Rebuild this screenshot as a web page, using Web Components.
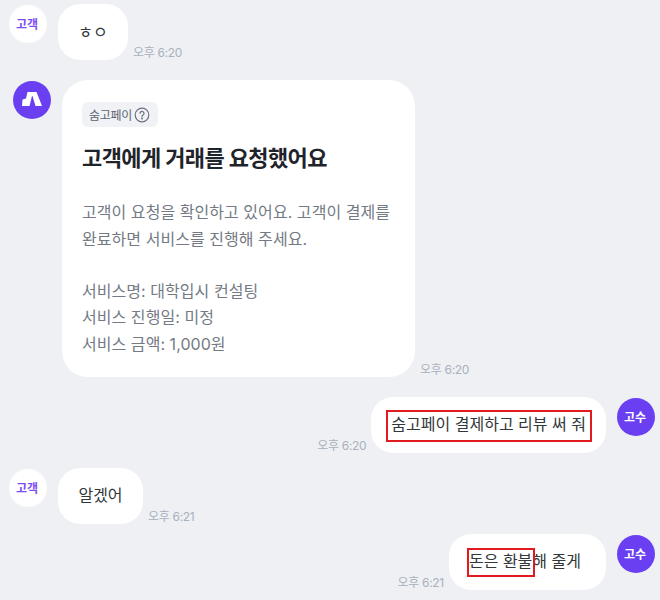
<!DOCTYPE html>
<html lang="ko">
<head>
<meta charset="utf-8">
<style>
  html, body { margin: 0; background: #eef0f4; }
  body {
    height: 600px;
    overflow: hidden;
    font-family: Inter, "Noto Sans CJK KR", sans-serif;
    color: #323739;
  }
  .list { display: flex; flex-direction: column; padding: 4px 5px 0 9px; }
</style>
</head>
<body>
<div class="list">
  <chat-row time="오후 6:20">
    <chat-avatar slot="avatar" kind="customer">고객</chat-avatar>
    <chat-bubble style="width:70px;padding-bottom:0">ㅎㅇ</chat-bubble>
  </chat-row>

  <chat-row time="오후 6:20" style="margin-top:20px;--avatar-nudge:4px;--row-gap:11px;--avatar-top:1px">
    <chat-avatar slot="avatar" kind="logo"></chat-avatar>
    <pay-card></pay-card>
  </chat-row>

  <chat-row mine time="오후 6:20" style="margin-top:20px">
    <chat-avatar slot="avatar" kind="pro">고수</chat-avatar>
    <chat-bubble>숨고페이 결제하고 리뷰 써 줘<mark-box style="left:15px;top:13px;width:206px;height:32px"></mark-box></chat-bubble>
  </chat-row>

  <chat-row time="오후 6:21" style="margin-top:15px">
    <chat-avatar slot="avatar" kind="customer">고객</chat-avatar>
    <chat-bubble style="width:85px">알겠어</chat-bubble>
  </chat-row>

  <chat-row mine time="오후 6:21" style="margin-top:10px">
    <chat-avatar slot="avatar" kind="pro">고수</chat-avatar>
    <chat-bubble style="padding-right:25px">돈은 환불해 줄게<mark-box style="left:18px;top:14px;width:68px;height:29px"></mark-box></chat-bubble>
  </chat-row>
</div>

<script>
class ChatRow extends HTMLElement {
    constructor() {
        super();
        this.attachShadow({ mode: 'open' });
    }

    connectedCallback() {
        const time = this.getAttribute('time') ?? '';
        this.shadowRoot.innerHTML = `
      <style>
        :host{
          display:flex;
          align-items:flex-start;
          gap: var(--row-gap, 11px);
        }
        :host([mine]){ flex-direction: row-reverse; }
        .avatar{
          display:flex;
          margin-top: var(--avatar-top, 1px);
          margin-left: var(--avatar-nudge, 0);
        }
        .body{
          display:flex;
          align-items:flex-end;
          gap:5px;
          min-width:0;
        }
        :host([mine]) .body{ flex-direction: row-reverse; }
        .time{
          font-size:12px;
          line-height:14px;
          letter-spacing:-0.3px;
          color:#a9b1bd;
          white-space:nowrap;
        }
      </style>
      <div class="avatar"><slot name="avatar"></slot></div>
      <div class="body">
        <slot></slot>
        <span class="time">${time}</span>
      </div>
    `;
    }
}

class ChatAvatar extends HTMLElement {
    constructor() {
        super();
        this.attachShadow({ mode: 'open' });
    }

    connectedCallback() {
        const logo = this.getAttribute('kind') === 'logo';
        this.shadowRoot.innerHTML = `
      <style>
        :host{
          display:flex;
          align-items:center;
          justify-content:center;
          box-sizing:border-box;
          width:38px;
          height:38px;
          padding:0 2px 2px 0;
          border-radius:50%;
          font-size:12px;
          font-weight:700;
          background:#6a3ff2;
          color:#fff;
        }
        :host([kind="customer"]){ background:#fff; color:#7a4df5; }
        :host([kind="logo"]){ padding:0 0 2px 0; }
        svg{ display:block; }
      </style>
      ${logo
          ? `<svg width="20" height="14" viewBox="0 0 20 14"><path fill="#fff" d="M5.500 0H14.500L20 14H13.500L10.500 4H10L7.500 14H0L.5 7.500L4 6.500Z"/></svg>`
          : `<slot></slot>`}
    `;
    }
}

class ChatBubble extends HTMLElement {
    constructor() {
        super();
        this.attachShadow({ mode: 'open' });
    }

    connectedCallback() {
        this.shadowRoot.innerHTML = `
      <style>
        :host{
          display:flex;
          align-items:center;
          justify-content:center;
          position:relative;
          box-sizing:border-box;
          height:56px;
          padding:0 20px 2px;
          border-radius:22px;
          background:#fff;
          font-size:16px;
          line-height:24px;
          white-space:nowrap;
        }
      </style>
      <slot></slot>
    `;
    }
}

class MarkBox extends HTMLElement {
    constructor() {
        super();
        this.attachShadow({ mode: 'open' });
    }

    connectedCallback() {
        this.shadowRoot.innerHTML = `
      <style>
        :host{
          position:absolute;
          box-sizing:border-box;
          border:2px solid #e11a1f;
        }
      </style>
    `;
    }
}

class PayCard extends HTMLElement {
    constructor() {
        super();
        this.attachShadow({ mode: 'open' });
    }

    connectedCallback() {
        this.shadowRoot.innerHTML = `
      <style>
        :host{
          display:block;
          box-sizing:border-box;
          width:353px;
          height:297px;
          padding:22px 20px;
          border-radius:26px;
          background:#fff;
        }
        .tag{
          display:inline-flex;
          align-items:center;
          gap:3px;
          height:25px;
          padding:0 8px 0 7px;
          border-radius:6px;
          background:#f0f2f5;
          color:#5c6470;
          font-size:12px;
          letter-spacing:-0.3px;
        }
        .tag svg{ display:block; margin-left:-1px; }
        h2{
          margin:16px 0 0;
          font-size:22px;
          line-height:30px;
          font-weight:700;
          letter-spacing:-0.6px;
          color:#1f242b;
        }
        p{
          margin:25px 0 0;
          font-size:16px;
          line-height:26.500px;
          letter-spacing:.05px;
          color:#737a84;
        }
        p.lead{
          margin-top:25.500px;
          line-height:27px;
        }
      </style>
      <span class="tag">숨고페이
        <svg width="16" height="16" viewBox="0 0 16 16" fill="none" stroke="#6b7280" stroke-width="1.2" stroke-linecap="round">
          <circle cx="8" cy="8" r="6.8"/>
          <path d="M6 6.300a2 2 0 1 1 3 1.800c-.7.400-1 .800-1 1.500"/>
          <circle cx="8" cy="11.600" r=".4" fill="#6b7280"/>
        </svg>
      </span>
      <h2>고객에게 거래를 요청했어요</h2>
      <p class="lead">고객이 요청을 확인하고 있어요. 고객이 결제를<br>완료하면 서비스를 진행해 주세요.</p>
      <p>서비스명: 대학입시 컨설팅<br>서비스 진행일: 미정<br>서비스 금액: 1,000원</p>
    `;
    }
}

customElements.define('chat-row', ChatRow);
customElements.define('chat-avatar', ChatAvatar);
customElements.define('chat-bubble', ChatBubble);
customElements.define('mark-box', MarkBox);
customElements.define('pay-card', PayCard);
</script>
</body>
</html>
